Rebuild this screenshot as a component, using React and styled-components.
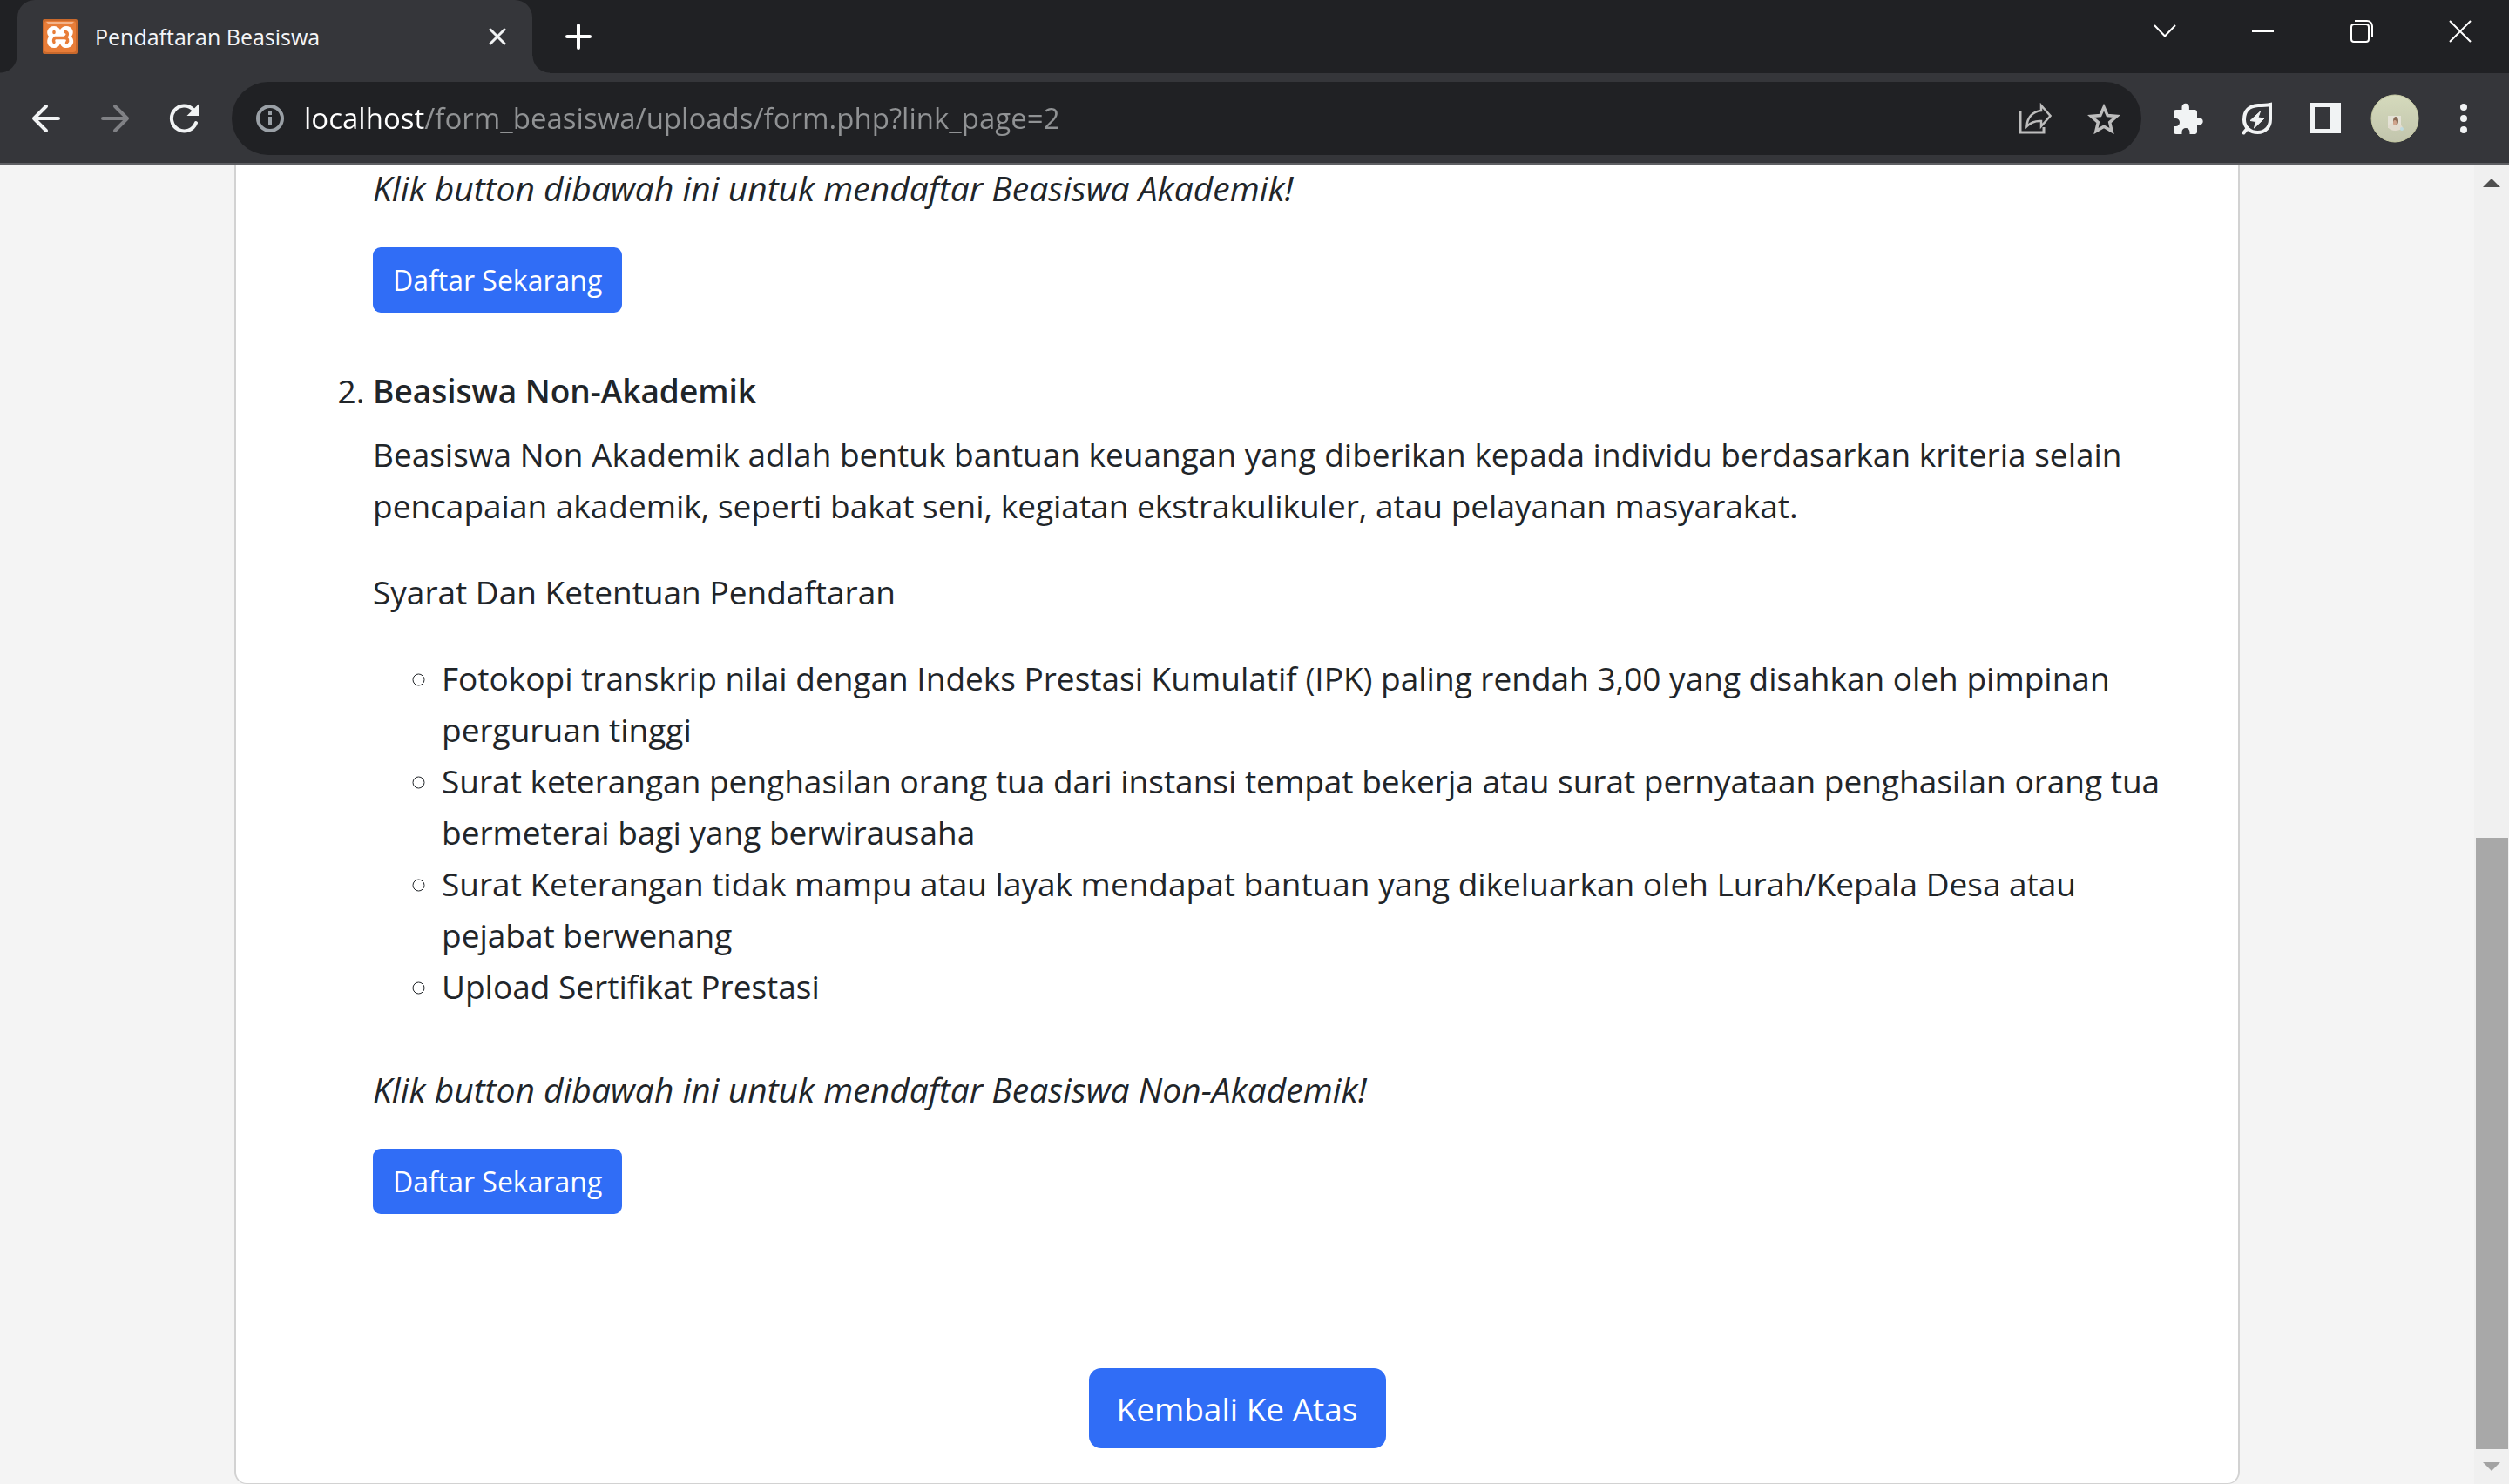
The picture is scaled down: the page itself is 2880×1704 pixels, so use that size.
import React from "react";
import styled, { createGlobalStyle, css } from "styled-components";

const fontStack = `"Open Sans", "Noto Sans", sans-serif`;

const GlobalStyle = createGlobalStyle`
  *, *::before, *::after { box-sizing: border-box; }
  html, body { margin: 0; padding: 0; }
  body { font-family: ${fontStack}; color: #212529; background: #f4f4f4; overflow: hidden; }
  button, input { font: inherit; }
`;

const Browser = styled.div`
  display: flex;
  flex-direction: column;
  height: 100vh;
`;

/* ---------- tab strip ---------- */

const TabStrip = styled.header`
  display: flex;
  align-items: flex-start;
  flex: none;
  height: 84px;
  padding-left: 20px;
  background: #202124;
`;

const Tab = styled.div`
  position: relative;
  display: flex;
  align-items: center;
  gap: 20px;
  width: 591px;
  height: 84px;
  padding: 0 20px 0 29px;
  border-radius: 20px 20px 0 0;
  background: #35363a;

  &::before,
  &::after {
    content: "";
    position: absolute;
    bottom: 0;
    width: 20px;
    height: 20px;
  }
  &::before {
    right: 100%;
    background: radial-gradient(circle at 0 0, transparent 19px, #35363a 20px);
  }
  &::after {
    left: 100%;
    background: radial-gradient(circle at 100% 0, transparent 19px, #35363a 20px);
  }
`;

const TabTitle = styled.span`
  flex: 1;
  font-size: 25px;
  line-height: 40px;
  color: #f4f5f7;
  white-space: nowrap;
`;

const IconButton = styled.button`
  display: flex;
  align-items: center;
  justify-content: center;
  flex: none;
  width: ${(p) => p.$width || 79}px;
  height: ${(p) => p.$height || 84}px;
  padding: 0;
  border: 0;
  background: transparent;
  color: ${(p) => p.$color || "#f1f3f4"};
`;

const WindowControls = styled.div`
  display: flex;
  margin-left: auto;
`;

/* ---------- toolbar ---------- */

const Toolbar = styled.nav`
  display: flex;
  align-items: center;
  flex: none;
  height: 105px;
  padding: 0 13px;
  border-bottom: 2px solid #5f6064;
  background: #35363a;
`;

const Omnibox = styled.form`
  display: flex;
  align-items: center;
  flex: 1;
  height: 84px;
  margin: 0 14px 0 16px;
  padding: 0 4px;
  border-radius: 42px;
  background: #202124;
`;

const Address = styled.input`
  flex: 1;
  min-width: 0;
  height: 60px;
  padding: 0;
  border: 0;
  outline: 0;
  font-size: 33px;
  line-height: 60px;
  color: #909294;
  background: linear-gradient(90deg, #ffffff 138px, #909294 138px);
  background-clip: text;
  -webkit-background-clip: text;
  -webkit-text-fill-color: transparent;
`;

/* ---------- page ---------- */

const Viewport = styled.div`
  display: flex;
  flex: 1;
  min-height: 0;
`;

const Page = styled.main`
  display: flex;
  flex-direction: column;
  justify-content: flex-end;
  flex: 1;
  min-width: 0;
  padding: 0 269px;
  overflow: hidden;
  background: #f4f4f4;
`;

const Card = styled.section`
  flex: none;
  padding: 0 78px 40px;
  border: solid #d2d2d2;
  border-width: 0 2px 1px;
  border-radius: 0 0 14px 14px;
  background: #ffffff;
  font-size: 37px;
  line-height: 59px;
`;

const ProgramList = styled.ol`
  margin: 0;
  padding: 0 0 0 79px;
`;

const Program = styled.li`
  padding-bottom: ${(p) => (p.$last ? 177 : 60)}px;
  ${(p) =>
    p.$unnumbered &&
    css`
      list-style: none;
    `}
`;

const ProgramTitle = styled.h2`
  margin: 0 0 14px;
  font-size: inherit;
  font-weight: 600;
`;

const Paragraph = styled.p`
  margin: 0 0 40px;
`;

const Requirements = styled.ul`
  margin: 0 0 59px;
  padding-left: 79px;
  list-style: circle;
`;

const Invitation = styled.p`
  margin: 0 0 39px;
  font-size: 39px;
  font-style: italic;
`;

const Button = styled.button`
  display: block;
  padding: ${(p) => (p.$large ? "17px 32px 16px" : "12px 23px")};
  border: 0;
  border-radius: ${(p) => (p.$large ? 14 : 9)}px;
  background: #306df6;
  color: #ffffff;
  font-size: ${(p) => (p.$large ? 37 : 32)}px;
  line-height: ${(p) => (p.$large ? 59 : 51)}px;
`;

const Centered = styled.div`
  display: flex;
  justify-content: center;
`;

/* ---------- scroll bar ---------- */

const ScrollBar = styled.div`
  display: flex;
  flex-direction: column;
  flex: none;
  width: 40px;
  background: #f0f0f0;
`;

const Track = styled.div`
  display: flex;
  flex-direction: column;
  flex: 1;
  padding: 0 1px 0 2px;
`;

const TrackSpace = styled.div`
  flex: 51;
`;

const Thumb = styled.div`
  flex: 49;
  background: #a8a8a8;
`;

/* ---------- drawings ---------- */

const Svg = ({ w, h = w, children, ...rest }) => (
  <svg width={w} height={h} viewBox={`0 0 ${w} ${h}`} fill="none" aria-hidden="true" {...rest}>
    {children}
  </svg>
);

const Favicon = () => (
  <Svg w={40}>
    <rect width="40" height="40" rx="2" fill="#c9692c" />
    <rect x="2" y="2" width="36" height="36" rx="3" fill="#e87d38" />
    <path d="M4 3h32l-3 3H7z" fill="#f3b48b" />
    <path
      d="M13 8c3 0 5 1.500 7 4 2-2.500 4-4 7-4 7 0 10 7 6 12 5 6 1 13-6 13-3 0-5.500-1-7-5-1.500 4-4 5-7 5-7 0-10-7-6-13-4-5-1-12 6-12z"
      fill="#fff"
    />
    <path
      d="M13 14.500v1M14 21.500h11M15 21.500c-2.500.5-3 3-2 5M26 14.500c3 1 3.500 4.500-1 7 4 .5 4.500 3 2.500 5.500"
      stroke="#e87d38"
      strokeWidth="3.500"
      strokeLinecap="round"
    />
  </Svg>
);

const CloseTabIcon = () => (
  <Svg w={20}>
    <path d="M2 2l16 16M18 2L2 18" stroke="currentColor" strokeWidth="3" strokeLinecap="round" />
  </Svg>
);

const PlusIcon = () => (
  <Svg w={30}>
    <path d="M15 2v26M2 15h26" stroke="currentColor" strokeWidth="4" strokeLinecap="round" />
  </Svg>
);

const ChevronIcon = () => (
  <Svg w={26} h={16}>
    <path d="M1 1l12 12.500L25 1" stroke="currentColor" strokeWidth="2" />
  </Svg>
);

const MinimizeIcon = () => (
  <Svg w={25} h={2}>
    <path d="M0 1h25" stroke="currentColor" strokeWidth="2" />
  </Svg>
);

const RestoreIcon = () => (
  <Svg w={26}>
    <rect x="1" y="5" width="20" height="20" rx="3" stroke="currentColor" strokeWidth="2" />
    <path d="M5 1h14a6 6 0 0 1 6 6v13" stroke="currentColor" strokeWidth="2" />
  </Svg>
);

const CloseIcon = () => (
  <Svg w={26}>
    <path d="M1 1l24 24M25 1L1 25" stroke="currentColor" strokeWidth="2" />
  </Svg>
);

const ArrowIcon = ({ forward }) => (
  <Svg w={34}>
    <path
      d={forward ? "M17 3l14 14-14 14M31 17H3" : "M17 3L3 17l14 14M3 17h28"}
      stroke="currentColor"
      strokeWidth="4"
      strokeLinecap="round"
      strokeLinejoin="round"
    />
  </Svg>
);

const ReloadIcon = () => (
  <Svg w={36}>
    <path
      d="M32 23A14.500 14.500 0 1 1 29 8"
      stroke="currentColor"
      strokeWidth="4"
      strokeLinecap="round"
    />
    <path d="M35 1.500V15H21.500z" fill="currentColor" />
  </Svg>
);

const InfoIcon = () => (
  <Svg w={32}>
    <circle cx="16" cy="16" r="14" stroke="currentColor" strokeWidth="4" />
    <path d="M16 14v10M16 8v4" stroke="currentColor" strokeWidth="4" />
  </Svg>
);

const ShareIcon = () => (
  <Svg w={38} h={36}>
    <path d="M2 10v24h27v-6" stroke="currentColor" strokeWidth="3" />
    <path
      d="M26 3l10.500 12L26 27v-6c-7-.5-12 1.500-16.500 6C10 17 16 10 26 9z"
      stroke="currentColor"
      strokeWidth="2.500"
    />
  </Svg>
);

const StarIcon = () => (
  <Svg w={38} h={36}>
    <path
      d="M19 5l4.200 9.600 10.500.9-8 6.900 2.400 10.200L19 27.200l-9.100 5.400 2.400-10.200-8-6.900 10.500-.9z"
      stroke="currentColor"
      strokeWidth="3.500"
    />
  </Svg>
);

const PuzzleIcon = () => (
  <Svg w={36} h={36}>
    <path
      d="M4 8h6.500V5a4.200 4.200 0 0 1 8.400 0v3H25a3 3 0 0 1 3 3v6.200h2.500a4.200 4.200 0 0 1 0 8.400H28V33a3 3 0 0 1-3 3h-5.500v-2.500a4.500 4.500 0 0 0-9 0V36H4a3 3 0 0 1-3-3v-6h2.500a4.500 4.500 0 0 0 0-9H1v-7a3 3 0 0 1 3-3z"
      fill="currentColor"
    />
  </Svg>
);

const EnergyIcon = () => (
  <Svg w={36} h={38}>
    <path
      d="M33 3v17c0 9-6 15-14.500 15S3 29 3 20.500C3 10 9 4.500 19 4c5 0 9 0 14-1z"
      stroke="currentColor"
      strokeWidth="4"
    />
    <path d="M7 30l-4.500 5.500" stroke="currentColor" strokeWidth="4" strokeLinecap="round" />
    <path
      d="M21.500 11L10 21.500l6.500 1L14.500 30 26 19l-7-1z"
      fill="currentColor"
      stroke="currentColor"
      strokeLinejoin="round"
    />
  </Svg>
);

const PanelIcon = () => (
  <Svg w={35}>
    <path d="M0 0h35v35H0zM5 5v25h17V5z" fill="currentColor" fillRule="evenodd" />
  </Svg>
);

const AvatarIcon = () => (
  <Svg w={56}>
    <defs>
      <linearGradient id="avatar" x1="0" y1="0" x2="0" y2="1">
        <stop offset="0" stopColor="#d5dabc" />
        <stop offset="1" stopColor="#c2c5ad" />
      </linearGradient>
    </defs>
    <circle cx="28" cy="28" r="27" fill="url(#avatar)" stroke="#c9cda6" />
    <rect x="20" y="25" width="15" height="14" fill="#e4e2d6" />
    <path d="M20 38c0-4 4-5 8-5s8 2 9 6c-5 4-14 4-17-1z" fill="#e2dccf" />
    <ellipse cx="29" cy="31" rx="3" ry="5" fill="#8a6a55" />
    <ellipse cx="28" cy="33" rx="2" ry="3" fill="#d0a48c" />
    <circle cx="36" cy="40" r="2" fill="#c0dce0" />
  </Svg>
);

const MenuIcon = () => (
  <Svg w={8} h={34}>
    <circle cx="4" cy="4" r="4" fill="currentColor" />
    <circle cx="4" cy="17" r="4" fill="currentColor" />
    <circle cx="4" cy="30" r="4" fill="currentColor" />
  </Svg>
);

const ScrollArrow = ({ down }) => (
  <Svg w={20} h={10}>
    <path d={down ? "M0 0h20L10 10z" : "M0 10h20L10 0z"} fill="currentColor" />
  </Svg>
);

const requirements = [
  "Fotokopi transkrip nilai dengan Indeks Prestasi Kumulatif (IPK) paling rendah 3,00 yang disahkan oleh pimpinan perguruan tinggi",
  "Surat keterangan penghasilan orang tua dari instansi tempat bekerja atau surat pernyataan penghasilan orang tua bermeterai bagi yang berwirausaha",
  "Surat Keterangan tidak mampu atau layak mendapat bantuan yang dikeluarkan oleh Lurah/Kepala Desa atau pejabat berwenang",
  "Upload Sertifikat Prestasi",
];

export default function App() {
  return (
    <Browser>
      <GlobalStyle />
      <TabStrip>
        <Tab>
          <Favicon />
          <TabTitle>Pendaftaran Beasiswa</TabTitle>
          <IconButton $width={40} aria-label="Close tab">
            <CloseTabIcon />
          </IconButton>
        </Tab>
        <IconButton $width={106} $color="#ffffff" aria-label="New tab">
          <PlusIcon />
        </IconButton>
        <WindowControls>
          <IconButton $width={113} $height={72} $color="#ffffff" aria-label="Search tabs">
            <ChevronIcon />
          </IconButton>
          <IconButton $width={113} $height={72} $color="#ffffff" aria-label="Minimize">
            <MinimizeIcon />
          </IconButton>
          <IconButton $width={113} $height={72} $color="#ffffff" aria-label="Restore">
            <RestoreIcon />
          </IconButton>
          <IconButton $width={113} $height={72} $color="#ffffff" aria-label="Close window">
            <CloseIcon />
          </IconButton>
        </WindowControls>
      </TabStrip>

      <Toolbar>
        <IconButton aria-label="Back">
          <ArrowIcon />
        </IconButton>
        <IconButton $color="#808185" aria-label="Forward">
          <ArrowIcon forward />
        </IconButton>
        <IconButton aria-label="Reload">
          <ReloadIcon />
        </IconButton>
        <Omnibox onSubmit={(e) => e.preventDefault()}>
          <IconButton type="button" $color="#9aa0a6" aria-label="Site information">
            <InfoIcon />
          </IconButton>
          <Address
            aria-label="Address"
            defaultValue="localhost/form_beasiswa/uploads/form.php?link_page=2"
            spellCheck={false}
          />
          <IconButton type="button" $color="#bdbdbd" aria-label="Share">
            <ShareIcon />
          </IconButton>
          <IconButton type="button" $color="#bdbdbd" aria-label="Bookmark">
            <StarIcon />
          </IconButton>
        </Omnibox>
        <IconButton aria-label="Extensions">
          <PuzzleIcon />
        </IconButton>
        <IconButton aria-label="Energy saver">
          <EnergyIcon />
        </IconButton>
        <IconButton aria-label="Side panel">
          <PanelIcon />
        </IconButton>
        <IconButton aria-label="Profile">
          <AvatarIcon />
        </IconButton>
        <IconButton aria-label="Menu">
          <MenuIcon />
        </IconButton>
      </Toolbar>

      <Viewport>
        <Page>
          <Card>
            <ProgramList>
              <Program $unnumbered>
                <Invitation>Klik button dibawah ini untuk mendaftar Beasiswa Akademik!</Invitation>
                <Button>Daftar Sekarang</Button>
              </Program>
              <Program $last>
                <ProgramTitle>Beasiswa Non-Akademik</ProgramTitle>
                <Paragraph>
                  Beasiswa Non Akademik adlah bentuk bantuan keuangan yang diberikan kepada individu
                  berdasarkan kriteria selain pencapaian akademik, seperti bakat seni, kegiatan
                  ekstrakulikuler, atau pelayanan masyarakat.
                </Paragraph>
                <Paragraph>Syarat Dan Ketentuan Pendaftaran</Paragraph>
                <Requirements>
                  {requirements.map((text) => (
                    <li key={text}>{text}</li>
                  ))}
                </Requirements>
                <Invitation>
                  Klik button dibawah ini untuk mendaftar Beasiswa Non-Akademik!
                </Invitation>
                <Button>Daftar Sekarang</Button>
              </Program>
            </ProgramList>
            <Centered>
              <Button $large>Kembali Ke Atas</Button>
            </Centered>
          </Card>
        </Page>
        <ScrollBar>
          <IconButton $width={40} $height={42} $color="#505050" aria-label="Scroll up">
            <ScrollArrow />
          </IconButton>
          <Track>
            <TrackSpace />
            <Thumb />
          </Track>
          <IconButton $width={40} $height={40} $color="#a3a3a3" aria-label="Scroll down">
            <ScrollArrow down />
          </IconButton>
        </ScrollBar>
      </Viewport>
    </Browser>
  );
}
